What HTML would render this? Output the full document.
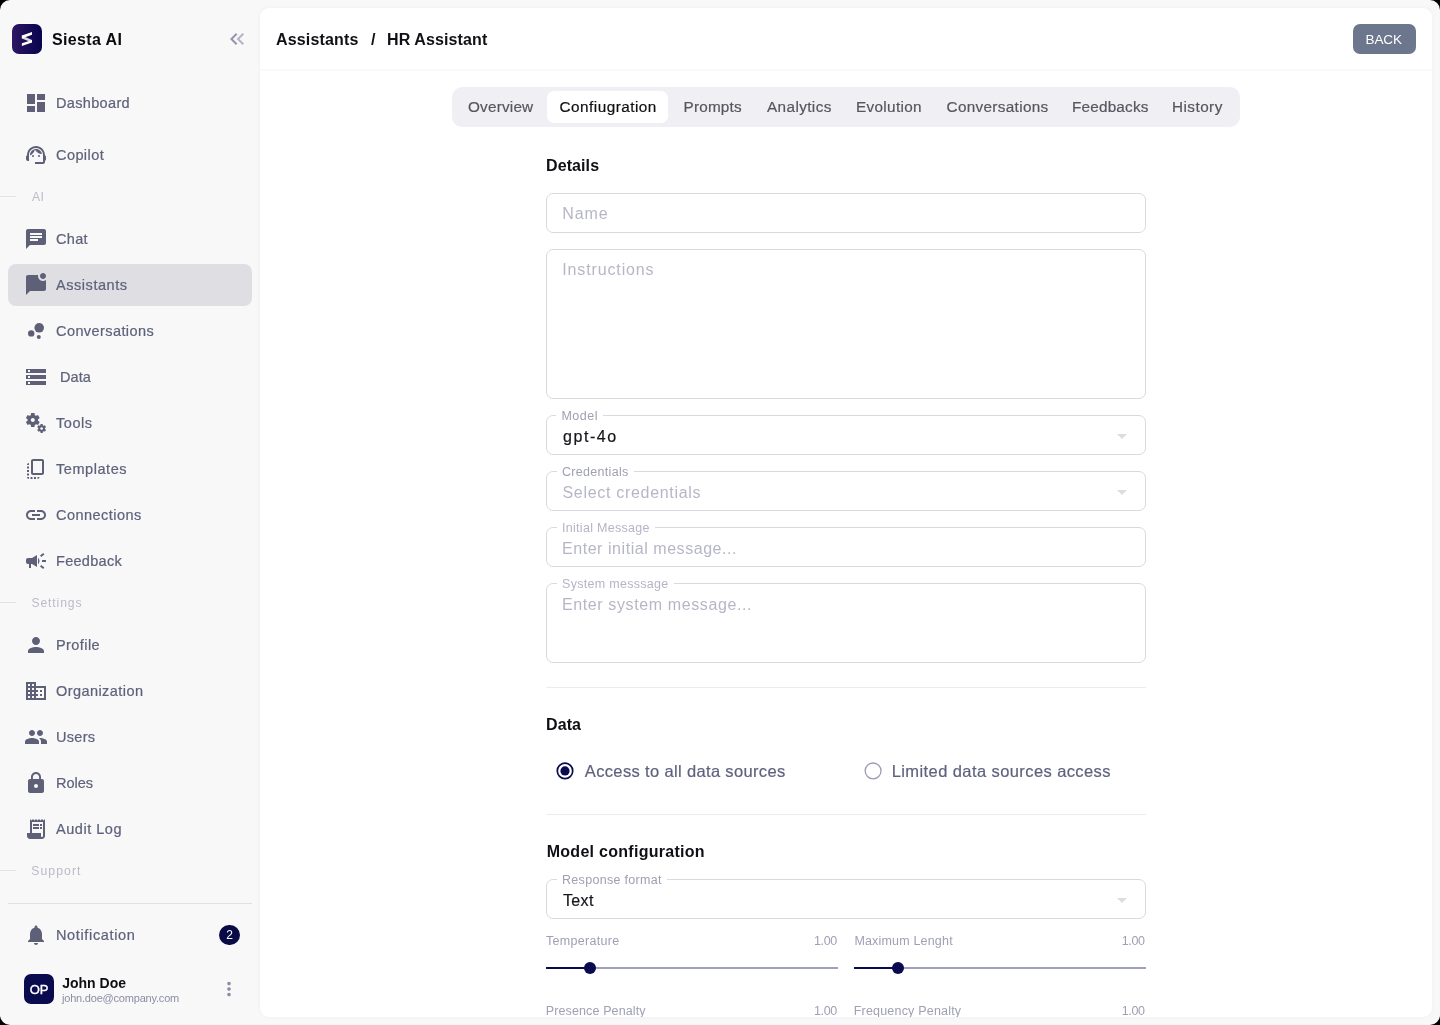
<!DOCTYPE html>
<html lang="en">
<head>
<meta charset="utf-8">
<title>Siesta AI - HR Assistant</title>
<style>
*{box-sizing:border-box;margin:0;padding:0}
html,body{width:1440px;height:1025px;overflow:hidden;background:#000;font-family:"Liberation Sans",sans-serif;}
#app{will-change:transform;position:absolute;left:0;top:0;width:1440px;height:1025px;background:#f8f8f9;border-radius:10px;overflow:hidden;}
.abs{position:absolute}
/* sidebar */
#side{position:absolute;left:0;top:0;width:260px;height:1025px;}
.logo{position:absolute;left:12px;top:24px;width:30px;height:30px;border-radius:7px;box-shadow:0 0 0 .6px rgba(255,255,255,.9);background:linear-gradient(90deg,#2e1762 0%,#1a0c58 50%,#08044e 100%);}
.brand{position:absolute;left:52px;top:30px;font-size:16px;font-weight:700;color:#0b0b0f;line-height:20px;white-space:nowrap;letter-spacing:.36px}
.nav{position:absolute;left:8px;width:244px;height:42px;border-radius:8px;}
.nav.on{background:#dedee3}
.nav svg{position:absolute;left:16px;top:9px;width:24px;height:24px;fill:#5e6078}
.nav span{position:absolute;left:48px;top:11px;font-size:14.5px;line-height:20px;color:#5f627b;white-space:nowrap;-webkit-text-stroke:.22px #5f627b}
.sec{position:absolute;left:32px;font-size:12.2px;line-height:16px;color:#babbc8;white-space:nowrap;letter-spacing:.3px}
.secl{position:absolute;left:0;width:16px;height:1px;background:#e2e2e8}
/* main card */
#card{position:absolute;left:260px;top:8px;width:1172px;height:1009px;background:#fff;border-radius:9px;overflow:hidden;box-shadow:0 0 5px rgba(30,30,70,.045)}
#hdr{position:absolute;left:0;top:0;width:1172px;height:63px;border-bottom:2px solid #fafafb}
.title{position:absolute;left:16px;top:22px;font-size:16px;font-weight:700;line-height:20px;color:#111115;white-space:nowrap}
.back{position:absolute;left:1093px;top:16px;width:63px;height:30px;border-radius:7px;background:#6c768d}
.back span{position:absolute;left:13px;top:6px;color:#fff;font-size:13.5px;line-height:20px;letter-spacing:.6px;white-space:nowrap}
#pg{position:absolute;left:-260px;top:-8px;width:1440px;height:1025px}
#pg>*{position:absolute}
.tabs{left:452px;top:87px;width:788px;height:40px;border-radius:10px;background:#efeff4}
.tabon{left:547px;top:91px;width:121px;height:32px;border-radius:7px;background:#fff}
.tab{top:97px;font-size:15.3px;line-height:20px;color:#56565f;white-space:nowrap;letter-spacing:.2px;-webkit-text-stroke:.2px #56565f}
.tab.on{color:#101014;-webkit-text-stroke:.2px #101014}
.h{left:546px;font-size:16px;font-weight:700;line-height:20px;color:#0f0f14;white-space:nowrap;letter-spacing:.1px}
.fld{left:546px;width:600px;border:1px solid #d9d9df;border-radius:7px;background:#fff}
.fld>*{position:absolute}
.ph{left:16px;font-size:16px;line-height:20px;color:#b6b7c6;white-space:nowrap;letter-spacing:.35px}
.val{left:16px;font-size:16px;line-height:20px;color:#15151b;white-space:nowrap;letter-spacing:.35px;-webkit-text-stroke:.2px #15151b}
.lt{color:#b4b5c6 !important}
.lb{left:10px;top:-7px;padding:0 5px;background:#fff;font-size:12.5px;line-height:15px;color:#9fa0b2;white-space:nowrap;letter-spacing:.3px}
.dd{right:11px;top:8px;width:24px;height:24px;fill:#dcdce3}
.hr{left:546px;width:600px;height:1px;background:#ececf0}
.rad{width:17px;height:17px;border-radius:50%;border:1.4px solid #a0a1b8;background:#fff}
.rad.on{border:2px solid #0a0a4e}
.rad.on i{position:absolute;left:2px;top:2px;width:9px;height:9px;border-radius:50%;background:#0a0a4e}
.rtx{font-size:16.5px;line-height:20px;color:#5f627e;white-space:nowrap;letter-spacing:.5px;-webkit-text-stroke:.2px #5f627e}
.sl{font-size:12.5px;line-height:16px;color:#9fa0b5;white-space:nowrap;letter-spacing:.3px}
.sv{font-size:12.5px;line-height:16px;color:#9fa0b5;white-space:nowrap;letter-spacing:.2px}
.trk{width:292px;height:2px;background:#9fa0bd}
.trk b{position:absolute;left:0;top:0;width:44px;height:2px;background:#0a0a4e}
.trk u{position:absolute;left:38px;top:-5px;width:12px;height:12px;border-radius:50%;background:#0a0a4e}
</style>
</head>
<body>
<div id="app">
  <div id="side">
    <div class="logo">
      <svg class="abs" style="left:0;top:0" width="30" height="30" viewBox="0 0 30 30"><path d="M9.9 11.6v2.8l10.1 4.1V16z" fill="#d8d8d8"/><path d="M20 8v2.8L9.9 14.4v-2.8z" fill="#fff"/><path d="M20 16v2.6L9.9 22.1v-2.8z" fill="#fff"/></svg>
    </div>
    <div class="brand">Siesta AI</div>
    <svg class="abs" style="left:225px;top:27px" width="24" height="24" viewBox="0 0 24 24"><path d="M17.59 18 19 16.59 14.42 12 19 7.41 17.59 6l-6 6z" fill="#b4b4c6"/><path d="M11 18l1.41-1.41L7.83 12l4.58-4.59L11 6l-6 6z" fill="#9495ad"/></svg>
    <div class="nav" style="top:82px"><svg viewBox="0 0 24 24"><path d="M3 13h8V3H3v10zm0 8h8v-6H3v6zm10 0h8V11h-8v10zm0-18v6h8V3h-8z"/></svg><span style="letter-spacing:0.34px">Dashboard</span></div>
    <div class="nav" style="top:134px"><svg viewBox="0 0 24 24"><path d="M21 12.22C21 6.73 16.74 3 12 3c-4.69 0-9 3.65-9 9.28-.6.34-1 .98-1 1.72v2c0 1.1.9 2 2 2h1v-6.1c0-3.87 3.13-7 7-7s7 3.13 7 7V19h-8v2h8c1.1 0 2-.9 2-2v-1.22c.59-.31 1-.92 1-1.64v-2.3c0-.7-.41-1.31-1-1.62z"/><circle cx="9" cy="13" r="1"/><circle cx="15" cy="13" r="1"/><path d="M18 11.03C17.52 8.18 15.04 6 12.05 6c-3.03 0-6.29 2.51-6.03 6.45 2.47-1.01 4.33-3.21 4.86-5.89 1.31 2.63 4 4.44 7.12 4.47z"/></svg><span style="letter-spacing:0.42px">Copilot</span></div>
    <div class="secl" style="top:196px"></div><div class="sec" style="top:189px">AI</div>
    <div class="nav" style="top:218px"><svg viewBox="0 0 24 24"><path d="M20 2H4c-1.1 0-1.99.9-1.99 2L2 22l4-4h14c1.1 0 2-.9 2-2V4c0-1.1-.9-2-2-2zM6 9h12v2H6V9zm8 5H6v-2h8v2zm4-6H6V6h12v2z"/></svg><span style="letter-spacing:0.33px">Chat</span></div>
    <div class="nav on" style="top:264px"><svg viewBox="0 0 24 24"><path d="M22 6.98V16c0 1.1-.9 2-2 2H6l-4 4V4c0-1.1.9-2 2-2h10.1c-.06.32-.1.66-.1 1 0 2.76 2.24 5 5 5 1.13 0 2.16-.39 3-1.020zM16 3c0 1.660 1.340 3 3 3s3-1.340 3-3-1.340-3-3-3-3 1.340-3 3z"/></svg><span style="letter-spacing:0.55px">Assistants</span></div>
    <div class="nav" style="top:310px"><svg viewBox="0 0 24 24"><circle cx="7.2" cy="14.4" r="3.2"/><circle cx="14.8" cy="18" r="2"/><circle cx="15.2" cy="8.8" r="4.8"/></svg><span style="letter-spacing:0.42px">Conversations</span></div>
    <div class="nav" style="top:356px"><svg viewBox="0 0 24 24"><path d="M2 20h20v-4H2v4zm2-3h2v2H4v-2zM2 4v4h20V4H2zm4 3H4V5h2v2zm-4 7h20v-4H2v4zm2-3h2v2H4v-2z"/></svg><span style="left:52px;letter-spacing:0.05px">Data</span></div>
    <div class="nav" style="top:402px"><svg viewBox="0 0 24 24"><path d="M14.17 13.71l1.4-2.42c.09-.15.05-.34-.08-.45l-1.48-1.16c.03-.22.05-.45.05-.68s-.02-.46-.05-.69l1.48-1.16c.13-.11.17-.3.08-.45l-1.4-2.42c-.09-.15-.27-.21-.43-.15l-1.74.7c-.36-.28-.75-.51-1.18-.69l-.26-1.85c-.03-.16-.18-.29-.35-.29h-2.8c-.17 0-.32.13-.35.3L6.800 4.150c-.42.18-.82.41-1.18.69l-1.74-.7c-.16-.06-.34 0-.43.15l-1.4 2.42c-.09.15-.05.34.08.45l1.48 1.16c-.03.22-.05.45-.05.68s.02.46.05.69l-1.48 1.16c-.13.11-.17.3-.08.45l1.4 2.42c.09.15.27.21.43.15l1.74-.7c.36.28.75.51 1.18.69l.26 1.85c.03.16.18.29.35.29h2.8c.17 0 .32-.13.35-.3l.26-1.85c.42-.18.82-.41 1.18-.69l1.74.7c.16.06.34 0 .43-.15zM8.810 11c-1.1 0-2-.9-2-2s.9-2 2-2 2 .9 2 2-.9 2-2 2zm13.110 7.670l-.96-.74c.02-.14.04-.29.04-.44 0-.15-.01-.3-.04-.44l.95-.74c.08-.07.11-.19.05-.29l-.9-1.55c-.05-.1-.17-.13-.28-.1l-1.11.45c-.23-.18-.48-.33-.76-.44l-.17-1.18c-.01-.12-.11-.2-.21-.2h-1.790c-.11 0-.21.08-.22.19l-.17 1.180c-.27.12-.53.26-.76.44l-1.110-.45c-.1-.04-.22 0-.28.1l-.9 1.550c-.05.1-.04.22.05.29l.95.74c-.02.14-.03.29-.03.44 0 .15.01.3.03.44l-.95.74c-.08.07-.11.19-.05.29l.9 1.550c.05.1.17.13.28.1l1.110-.45c.23.18.48.33.76.44l.17 1.180c.02.11.11.19.22.19h1.790c.11 0 .21-.08.22-.19l.17-1.180c.27-.12.53-.26.75-.44l1.120.45c.1.04.22 0 .28-.1l.9-1.550c.06-.09.03-.21-.05-.28zm-4.290.16c-.74 0-1.350-.6-1.350-1.350s.6-1.350 1.350-1.350 1.350.6 1.350 1.350-.61 1.350-1.350 1.350z"/></svg><span style="letter-spacing:0.56px">Tools</span></div>
    <div class="nav" style="top:448px"><svg viewBox="0 0 24 24"><path d="M18 2H9c-1.1 0-2 .9-2 2v12c0 1.1.9 2 2 2h9c1.1 0 2-.9 2-2V4c0-1.1-.9-2-2-2zm0 14H9V4h9v12zM3 15v-2h2v2H3zm0-5.500h2v2H3v-2zM10 20h2v2h-2v-2zm-7-1.500v-2h2v2H3zM5 22c-1.1 0-2-.9-2-2h2v2zm3.500 0h-2v-2h2v2zm5 0v-2h2c0 1.100-.9 2-2 2zM5 6v2H3c0-1.100.9-2 2-2z"/></svg><span style="letter-spacing:0.56px">Templates</span></div>
    <div class="nav" style="top:494px"><svg viewBox="0 0 24 24"><path d="M3.900 12c0-1.710 1.390-3.100 3.100-3.100h4V7H7c-2.760 0-5 2.240-5 5s2.240 5 5 5h4v-1.900H7c-1.710 0-3.100-1.390-3.100-3.100zM8 13h8v-2H8v2zm9-6h-4v1.900h4c1.710 0 3.100 1.390 3.100 3.100s-1.390 3.100-3.100 3.100h-4V17h4c2.760 0 5-2.240 5-5s-2.240-5-5-5z"/></svg><span style="letter-spacing:0.47px">Connections</span></div>
    <div class="nav" style="top:540px"><svg viewBox="0 0 24 24"><path d="M18 11v2h4v-2h-4zm-2 6.610c.96.71 2.210 1.650 3.200 2.390.4-.53.8-1.070 1.200-1.600-.99-.74-2.240-1.680-3.200-2.400-.4.54-.8 1.080-1.200 1.610zM20.400 5.600c-.4-.53-.8-1.070-1.200-1.600-.99.74-2.240 1.680-3.200 2.400.4.53.8 1.070 1.200 1.600.96-.72 2.210-1.650 3.200-2.400zM4 9c-1.100 0-2 .9-2 2v2c0 1.100.9 2 2 2h1v4h2v-4h1l5 3V6L8 9H4zm11.500 3c0-1.330-.58-2.530-1.500-3.350v6.690c.92-.81 1.500-2.010 1.500-3.340z"/></svg><span style="letter-spacing:0.29px">Feedback</span></div>
    <div class="secl" style="top:602px"></div><div class="sec" style="top:595px;left:31.4px;letter-spacing:0.87px">Settings</div>
    <div class="nav" style="top:624px"><svg viewBox="0 0 24 24"><path d="M12 12c2.210 0 4-1.790 4-4s-1.790-4-4-4-4 1.790-4 4 1.790 4 4 4zm0 2c-2.670 0-8 1.340-8 4v2h16v-2c0-2.660-5.330-4-8-4z"/></svg><span style="letter-spacing:0.42px">Profile</span></div>
    <div class="nav" style="top:670px"><svg viewBox="0 0 24 24"><path d="M12 7V3H2v18h20V7H12zM6 19H4v-2h2v2zm0-4H4v-2h2v2zm0-4H4V9h2v2zm0-4H4V5h2v2zm4 12H8v-2h2v2zm0-4H8v-2h2v2zm0-4H8V9h2v2zm0-4H8V5h2v2zm10 12h-8v-2h2v-2h-2v-2h2v-2h-2V9h8v10zm-2-8h-2v2h2v-2zm0 4h-2v2h2v-2z"/></svg><span style="letter-spacing:0.43px">Organization</span></div>
    <div class="nav" style="top:716px"><svg viewBox="0 0 24 24"><path d="M16 11c1.660 0 2.990-1.340 2.990-3S17.660 5 16 5c-1.660 0-3 1.340-3 3s1.340 3 3 3zm-8 0c1.660 0 2.990-1.340 2.990-3S9.660 5 8 5C6.340 5 5 6.340 5 8s1.340 3 3 3zm0 2c-2.330 0-7 1.170-7 3.500V19h14v-2.500c0-2.330-4.670-3.500-7-3.500zm8 0c-.29 0-.62.02-.97.05 1.160.84 1.970 1.970 1.970 3.450V19h6v-2.500c0-2.330-4.670-3.500-7-3.500z"/></svg><span style="letter-spacing:0.31px">Users</span></div>
    <div class="nav" style="top:762px"><svg viewBox="0 0 24 24"><path d="M18 8h-1V6c0-2.760-2.240-5-5-5S7 3.240 7 6v2H6c-1.100 0-2 .9-2 2v10c0 1.100.9 2 2 2h12c1.100 0 2-.9 2-2V10c0-1.100-.9-2-2-2zm-6 9c-1.100 0-2-.9-2-2s.9-2 2-2 2 .9 2 2-.9 2-2 2zm3.100-9H8.900V6c0-1.710 1.390-3.100 3.100-3.100 1.710 0 3.100 1.390 3.100 3.100v2z"/></svg><span style="letter-spacing:0.00px">Roles</span></div>
    <div class="nav" style="top:808px"><svg viewBox="0 0 24 24"><path d="M19.500 3.500L18 2l-1.500 1.500L15 2l-1.500 1.500L12 2l-1.500 1.500L9 2 7.500 3.500 6 2v14H3v3c0 1.660 1.340 3 3 3h12c1.660 0 3-1.340 3-3V2l-1.500 1.500zM19 19c0 .55-.45 1-1 1s-1-.45-1-1v-3H8V5h11v14z"/><path d="M9 7h6v2H9zM16 7h2v2h-2zM9 10h6v2H9zM16 10h2v2h-2z"/></svg><span style="letter-spacing:0.53px">Audit Log</span></div>
    <div class="secl" style="top:870px"></div><div class="sec" style="top:863px;left:31.2px;letter-spacing:1.10px">Support</div>
    <div class="abs" style="left:8px;top:903px;width:244px;height:1px;background:#e0e0e6"></div>
    <div class="nav" style="top:914px"><svg viewBox="0 0 24 24"><path d="M12 22c1.100 0 2-.9 2-2h-4c0 1.100.89 2 2 2zm6-6v-5c0-3.070-1.640-5.640-4.500-6.320V4c0-.83-.67-1.500-1.500-1.500s-1.500.67-1.500 1.500v.68C7.630 5.360 6 7.920 6 11v5l-2 2v1h16v-1l-2-2z"/></svg><span style="letter-spacing:0.64px">Notification</span>
      <div class="abs" style="left:211px;top:11px;width:21px;height:20px;border-radius:10px;background:#0a0a47;color:#fff;font-size:12px;line-height:20px;text-align:center">2</div></div>
    <div class="abs" style="left:24px;top:974px;width:30px;height:30px;border-radius:7px;background:#0a0a4e;color:#fff;font-size:13px;line-height:31px;text-align:center;letter-spacing:-.2px;-webkit-text-stroke:.35px #fff">OP</div>
    <div class="abs" style="top:974px;font-size:14px;font-weight:700;line-height:18px;color:#0d0d12;white-space:nowrap;left:62.2px;letter-spacing:0px">John Doe</div>
    <div class="abs" style="top:991px;font-size:11px;line-height:14px;color:#8b8da4;white-space:nowrap;left:62.0px;letter-spacing:-0.20px">john.doe@company.com</div>
    <svg class="abs" style="left:218px;top:978px" width="22" height="22" viewBox="0 0 24 24"><path fill="#8c8ea6" d="M12 8c1.100 0 2-.9 2-2s-.9-2-2-2-2 .9-2 2 .9 2 2 2zm0 2c-1.100 0-2 .9-2 2s.9 2 2 2 2-.9 2-2-.9-2-2-2zm0 6c-1.100 0-2 .9-2 2s.9 2 2 2 2-.9 2-2-.9-2-2-2z"/></svg>
    <!--NAV-->
  </div>
  <div id="card">
    <div id="hdr">
      <div class="title" style="left:16px;letter-spacing:.17px">Assistants</div><div class="title" style="left:111px">/</div><div class="title" style="left:127px;letter-spacing:.12px">HR Assistant</div>
      <div class="back"><span style="left:12.5px;letter-spacing:-0.07px">BACK</span></div>
    </div>
    <div id="pg">
      <div class="tabs"></div>
      <div class="tabon"></div>
      <div class="tab" style="left:468px">Overview</div>
      <div class="tab on" style="left:559.5px;letter-spacing:.49px">Confiugration</div>
      <div class="tab" style="left:683.5px">Prompts</div>
      <div class="tab" style="left:767px;letter-spacing:.39px">Analytics</div>
      <div class="tab" style="left:856px;letter-spacing:.33px">Evolution</div>
      <div class="tab" style="left:946.5px;letter-spacing:.33px">Conversations</div>
      <div class="tab" style="left:1072px">Feedbacks</div>
      <div class="tab" style="left:1172px;letter-spacing:.45px">History</div>

      <div class="h" style="top:156px">Details</div>
      <div class="fld" style="top:193px;height:40px"><div class="ph" style="top:10px;left:15.2px;letter-spacing:0.91px">Name</div></div>
      <div class="fld" style="top:249px;height:150px"><div class="ph" style="top:10px;left:15.3px;letter-spacing:0.86px">Instructions</div></div>
      <div class="fld" style="top:415px;height:40px"><div class="lb" style="left:9.4px;letter-spacing:0.55px">Model</div><div class="val" style="top:11px;left:16.0px;letter-spacing:1.55px">gpt-4o</div><svg class="dd" viewBox="0 0 24 24"><path d="M7 10l5 5 5-5z"/></svg></div>
      <div class="fld" style="top:471px;height:40px"><div class="lb">Credentials</div><div class="ph" style="top:11px;left:15.5px;letter-spacing:0.69px">Select credentials</div><svg class="dd" viewBox="0 0 24 24"><path d="M7 10l5 5 5-5z"/></svg></div>
      <div class="fld" style="top:527px;height:40px"><div class="lb lt">Initial Message</div><div class="ph" style="top:11px;left:15.0px;letter-spacing:0.55px">Enter initial message...</div></div>
      <div class="fld" style="top:583px;height:80px"><div class="lb lt">System messsage</div><div class="ph" style="top:11px;left:15.0px;letter-spacing:0.61px">Enter system message...</div></div>
      <div class="hr" style="top:687px"></div>

      <div class="h" style="top:715px">Data</div>
      <svg style="left:556px;top:762px" width="18" height="18" viewBox="0 0 18 18"><circle cx="9" cy="8.9" r="7.7" fill="#fff" stroke="#0a0a4e" stroke-width="1.7"/><circle cx="9" cy="8.9" r="4.6" fill="#0a0a4e"/></svg>
      <div class="rtx" style="top:761px;left:584.8px;letter-spacing:0.35px">Access to all data sources</div>
      <svg style="left:864px;top:762px" width="18" height="18" viewBox="0 0 18 18"><circle cx="9.1" cy="8.9" r="7.9" fill="#fff" stroke="#9c9db5" stroke-width="1.3"/></svg>
      <div class="rtx" style="top:761px;left:891.7px;letter-spacing:0.41px">Limited data sources access</div>
      <div class="hr" style="top:814px"></div>

      <div class="h" style="top:842px;left:546.7px;letter-spacing:0.28px">Model configuration</div>
      <div class="fld" style="top:879px;height:40px"><div class="lb">Response format</div><div class="val" style="top:11px">Text</div><svg class="dd" viewBox="0 0 24 24"><path d="M7 10l5 5 5-5z"/></svg></div>

      <div class="sl" style="left:546px;top:933px">Temperature</div><div class="sv" style="top:933px;left:813.9px;letter-spacing:-0.33px">1.00</div>
      <div class="trk" style="left:546px;top:967px"><b></b><u></u></div>
      <div class="sl" style="top:933px;left:854.4px;letter-spacing:0.18px">Maximum Lenght</div><div class="sv" style="top:933px;left:1121.7px;letter-spacing:-0.33px">1.00</div>
      <div class="trk" style="left:854px;top:967px"><b></b><u></u></div>
      <div class="sl" style="top:1003px;left:545.7px;letter-spacing:0.13px">Presence Penalty</div><div class="sv" style="top:1003px;left:813.9px;letter-spacing:-0.33px">1.00</div>
      <div class="sl" style="top:1003px;left:853.7px;letter-spacing:0.20px">Frequency Penalty</div><div class="sv" style="top:1003px;left:1121.7px;letter-spacing:-0.33px">1.00</div>
    </div>
    <!--BODY-->
  </div>
</div>
</body>
</html>
